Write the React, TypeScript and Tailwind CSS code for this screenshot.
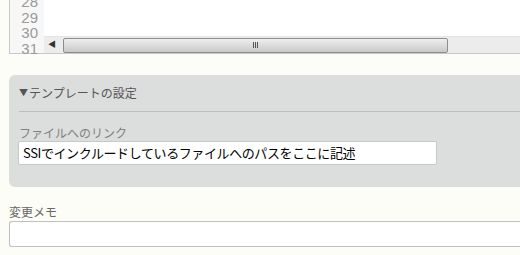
export default function App() {
  return (
    <div className="w-[520px] h-[255px] overflow-hidden bg-[#fdfdf7] text-[12px] font-['Liberation_Sans','Noto_Sans_CJK_JP',sans-serif]">
      {/* code editor tail */}
      <div className="ml-[9px] mt-[-6px] h-[60px] border-l border-b border-[#c8c8c8] bg-white flex">
        <div className="w-[34px] bg-[#f7f7f7] flex flex-col items-end pr-[6px] text-[#9a9a9a] text-[15px] leading-[15.5px]">
          <span>28</span>
          <span>29</span>
          <span>30</span>
          <span>31</span>
        </div>
        <div className="flex-1 flex flex-col justify-end">
          <div className="h-[17px] bg-[#ececec] border-t border-[#e4e4e4] flex items-center">
            <span className="w-[19px] text-[8px] text-[#333] pl-[4px]">◀</span>
            <div className="w-[385px] h-[15px] rounded-[2px] border border-[#8d8d8d] bg-gradient-to-b from-[#efefef] to-[#c9c9c9] flex items-center justify-center gap-[1px]">
              <span className="w-[1px] h-[6px] bg-[#555]" />
              <span className="w-[1px] h-[6px] bg-[#555]" />
              <span className="w-[1px] h-[6px] bg-[#555]" />
            </div>
          </div>
        </div>
      </div>

      {/* template settings panel */}
      <div className="ml-[9px] mt-[21px] h-[112px] bg-[#dcdddd] rounded-l-[6px] pl-[10px]">
        <div className="h-[36px] flex items-center text-[#555] font-['Noto_Sans_CJK_JP',sans-serif] text-[12px]">
          <span className="text-[9px] mr-[1px]">▼</span>テンプレートの設定
        </div>
        <div className="border-t border-[#bdbdbd]" />
        <div className="pt-[13px] text-[#808080] font-['Noto_Sans_CJK_JP',sans-serif] text-[12px] leading-[16px]">ファイルへのリンク</div>
        <div className="w-[419px] h-[24px] -ml-[1px] bg-white border border-[#c8c8c8] rounded-[2px] flex items-center pl-[4px] text-[13px] text-black font-['Noto_Sans_CJK_JP',sans-serif] tracking-[-0.4px]">
          SSIでインクルードしているファイルへのパスをここに記述
        </div>
      </div>

      {/* change memo */}
      <div className="ml-[9px] mt-[17px] text-[#666] font-['Noto_Sans_CJK_JP',sans-serif] text-[12px] leading-[16px]">変更メモ</div>
      <div className="ml-[9px] mt-[1px] h-[26px] bg-white border border-r-0 border-[#c0c0c0] rounded-l-[3px]" />
    </div>
  );
}
